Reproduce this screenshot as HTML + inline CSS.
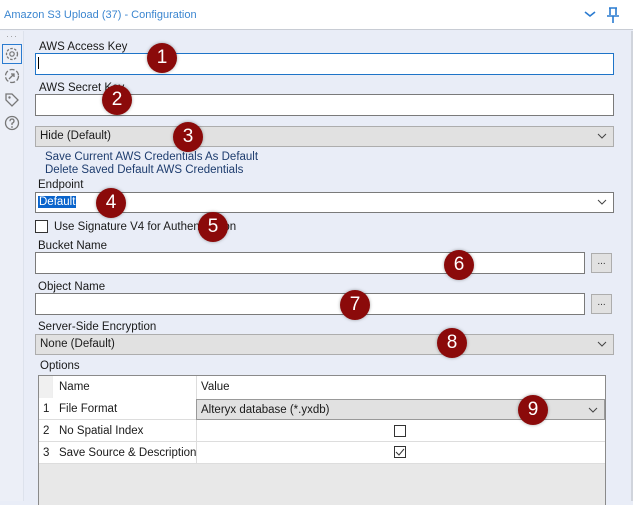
<!DOCTYPE html><html><head><style>
*{box-sizing:border-box;margin:0;padding:0}
body{width:633px;height:501px;overflow:hidden;background:#e9edf7;font-family:"Liberation Sans",sans-serif;font-size:11.5px;color:#1a1a1a;position:relative}
.a{position:absolute}
.hdr{left:0;top:0;width:633px;height:30px;background:#fff;border-bottom:1px solid #c8ccd4}
.side{left:0;top:31px;width:24px;height:470px;background:#eceff7;border-right:1px solid #dde2ec}
.in{background:#fff;border:1px solid #7a7a7a}
.dd{background:#e1e1e1;border:1px solid #adadad}
.lbl{font-size:11.5px}
.b{width:30px;height:30px;border-radius:50%;background:#8b0a0a;color:#fff;font-size:19px;text-align:center;line-height:30px;box-shadow:0 0 3px rgba(0,0,0,.35)}
.chev{position:absolute;right:6px;top:5px}
.btn{background:#e1e1e1;border:1px solid #adadad;width:21px;height:20px;text-align:center;font-size:10px;color:#333;line-height:16px}
.lnk{color:#1d3c6e;font-size:11.5px}
</style></head><body>
<div class="a hdr"></div>
<div class="a" style="left:4px;top:9px;color:#3b86d0;font-size:11px">Amazon S3 Upload (37) - Configuration</div>
<svg class="a" style="left:584px;top:10px" width="12" height="8"><path d="M1 2 L6 6 L11 2" stroke="#2a7bd0" stroke-width="1.6" fill="none"/></svg>
<svg class="a" style="left:606px;top:7px" width="14" height="17"><path d="M3 1 H11 M4 1 V8 M10 1 V8 M1 9 H13 M7 9 V16" stroke="#2a7bd0" stroke-width="1.6" fill="none"/></svg>
<div class="a side"></div>
<div class="a" style="left:6px;top:31px;color:#999;font-size:9px;letter-spacing:1px">···</div>
<div class="a" style="left:2px;top:44px;width:20px;height:20px;border:1px solid #2a7bd0"></div>
<svg class="a" style="left:4px;top:46px" width="16" height="16"><circle cx="8" cy="8" r="5.5" stroke="#777" stroke-width="1.3" fill="none" stroke-dasharray="2.5 1.5"/><circle cx="8" cy="8" r="2.2" stroke="#777" stroke-width="1.2" fill="none"/></svg>
<svg class="a" style="left:4px;top:68px" width="16" height="16"><circle cx="8" cy="8" r="6.5" stroke="#777" stroke-width="1.3" fill="none" stroke-dasharray="5 2"/><path d="M5 11 L10 6 M7 6 H10 V9" stroke="#777" stroke-width="1.3" fill="none"/></svg>
<svg class="a" style="left:4px;top:92px" width="16" height="16"><path d="M2 2 H8 L14 8 L8 14 L2 8 Z" stroke="#777" stroke-width="1.3" fill="none"/><circle cx="5.5" cy="5.5" r="1.2" fill="#777"/></svg>
<svg class="a" style="left:4px;top:115px" width="16" height="16"><circle cx="8" cy="8" r="6.5" stroke="#777" stroke-width="1.3" fill="none"/><path d="M6 6.3 Q6 4 8 4 Q10 4 10 6 Q10 7.5 8 8.3 V10" stroke="#777" stroke-width="1.3" fill="none"/><circle cx="8" cy="12" r="0.9" fill="#777"/></svg>

<div class="a lbl" style="left:39px;top:41px">AWS Access Key</div>
<div class="a in" style="left:35px;top:53px;width:579px;height:22px;border-color:#1e74c8"></div>
<div class="a" style="left:38px;top:57px;width:1px;height:12px;background:#000"></div>
<div class="a lbl" style="left:39px;top:82px">AWS Secret Key</div>
<div class="a in" style="left:35px;top:94px;width:579px;height:22px"></div>
<div class="a dd" style="left:35px;top:126px;width:579px;height:21px"><span style="position:absolute;left:4px;top:3px">Hide (Default)</span><svg class="chev" width="10" height="8"><path d="M1 2 L5 6 L9 2" stroke="#444" fill="none"/></svg></div>
<div class="a lnk" style="left:45px;top:151px">Save Current AWS Credentials As Default</div>
<div class="a lnk" style="left:45px;top:164px">Delete Saved Default AWS Credentials</div>
<div class="a lbl" style="left:38px;top:179px">Endpoint</div>
<div class="a in" style="left:35px;top:192px;width:579px;height:21px"><span style="position:absolute;left:2px;top:3px;background:#0a64cc;color:#fff;padding:0 1px">Default</span><svg class="chev" width="10" height="8"><path d="M1 2 L5 6 L9 2" stroke="#444" fill="none"/></svg></div>
<div class="a" style="left:35px;top:220px;width:13px;height:13px;border:1px solid #333;background:#fff"></div>
<div class="a lbl" style="left:54px;top:221px">Use Signature V4 for Authentication</div>
<div class="a lbl" style="left:38px;top:240px">Bucket Name</div>
<div class="a in" style="left:35px;top:252px;width:550px;height:22px"></div>
<div class="a btn" style="left:591px;top:253px">...</div>
<div class="a lbl" style="left:38px;top:281px">Object Name</div>
<div class="a in" style="left:35px;top:293px;width:550px;height:22px"></div>
<div class="a btn" style="left:591px;top:294px">...</div>
<div class="a lbl" style="left:38px;top:321px">Server-Side Encryption</div>
<div class="a dd" style="left:35px;top:334px;width:579px;height:21px"><span style="position:absolute;left:4px;top:3px">None (Default)</span><svg class="chev" width="10" height="8"><path d="M1 2 L5 6 L9 2" stroke="#444" fill="none"/></svg></div>
<div class="a lbl" style="left:40px;top:360px">Options</div>
<div class="a" style="left:38px;top:375px;width:568px;height:130px;background:#e8e8e8;border:1px solid #8a8a8a;border-bottom:none"></div>
<div class="a" style="left:39px;top:376px;width:566px;height:88px;background:#fff"></div>
<div class="a" style="left:39px;top:376px;width:13px;height:22px;background:#f0f0f0"></div>
<div class="a" style="left:39px;top:419px;width:566px;height:1px;background:#ddd"></div>
<div class="a" style="left:39px;top:441px;width:566px;height:1px;background:#ddd"></div>
<div class="a" style="left:39px;top:463px;width:566px;height:1px;background:#ddd"></div>
<div class="a" style="left:196px;top:376px;width:1px;height:88px;background:#ddd"></div>
<div class="a" style="left:52px;top:376px;width:1px;height:22px;background:#eee"></div>
<div class="a lbl" style="left:59px;top:381px">Name</div>
<div class="a lbl" style="left:201px;top:381px">Value</div>
<div class="a lbl" style="left:43px;top:403px">1</div><div class="a lbl" style="left:59px;top:403px">File Format</div>
<div class="a dd" style="left:196px;top:399px;width:409px;height:21px;border-color:#999"><span style="position:absolute;left:4px;top:4px">Alteryx database (*.yxdb)</span><svg class="chev" width="10" height="8" style="top:6px"><path d="M1 2 L5 6 L9 2" stroke="#444" fill="none"/></svg></div>
<div class="a lbl" style="left:43px;top:425px">2</div><div class="a lbl" style="left:59px;top:425px">No Spatial Index</div>
<div class="a" style="left:394px;top:425px;width:12px;height:12px;border:1px solid #333"></div>
<div class="a lbl" style="left:43px;top:447px">3</div><div class="a lbl" style="left:59px;top:447px">Save Source &amp; Description</div>
<div class="a" style="left:394px;top:446px;width:12px;height:12px;border:1px solid #333"></div>
<svg class="a" style="left:395px;top:447px" width="10" height="10"><path d="M1 5 L4 8 L9 2" stroke="#333" fill="none"/></svg>
<div class="a" style="left:631px;top:31px;width:2px;height:470px;background:#d0d4dc"></div>

<div class="a b" style="left:147px;top:43px">1</div>
<div class="a b" style="left:102px;top:85px">2</div>
<div class="a b" style="left:173px;top:122px">3</div>
<div class="a b" style="left:96px;top:188px">4</div>
<div class="a b" style="left:198px;top:212px">5</div>
<div class="a b" style="left:444px;top:250px">6</div>
<div class="a b" style="left:340px;top:290px">7</div>
<div class="a b" style="left:437px;top:328px">8</div>
<div class="a b" style="left:518px;top:395px">9</div>
</body></html>
